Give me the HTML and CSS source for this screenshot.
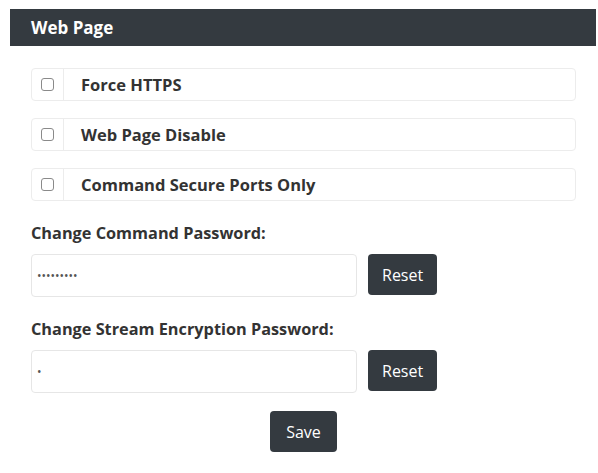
FILE: index.html
```html
<!DOCTYPE html>
<html lang="en">
<head>
    <meta charset="UTF-8">
    <meta name="viewport" content="width=device-width, initial-scale=1.0">
    <title>Web Page Settings</title>
    <link rel="stylesheet" href="styles.css">
</head>
<body>
    <div class="panel">
        <div class="panel-header">Web Page</div>

        <div class="panel-body">
            <div class="check-row">
                <span class="check-cell"><input type="checkbox" id="force-https"></span>
                <label class="check-label" for="force-https">Force HTTPS</label>
            </div>

            <div class="check-row">
                <span class="check-cell"><input type="checkbox" id="web-disable"></span>
                <label class="check-label" for="web-disable">Web Page Disable</label>
            </div>

            <div class="check-row">
                <span class="check-cell"><input type="checkbox" id="secure-ports"></span>
                <label class="check-label" for="secure-ports">Command Secure Ports Only</label>
            </div>

            <div class="field">
                <label class="field-label" for="cmd-pass">Change Command Password:</label>
                <div class="field-row">
                    <input class="text-input" type="password" id="cmd-pass" value="123456789">
                    <button class="btn">Reset</button>
                </div>
            </div>

            <div class="field">
                <label class="field-label" for="stream-pass">Change Stream Encryption Password:</label>
                <div class="field-row">
                    <input class="text-input" type="password" id="stream-pass" value="1">
                    <button class="btn">Reset</button>
                </div>
            </div>

            <div class="actions">
                <button class="btn btn-save">Save</button>
            </div>
        </div>
    </div>
</body>
</html>
```

FILE: styles.css
```css
* {
    margin: 0;
    padding: 0;
    box-sizing: border-box;
    font-family: 'Open Sans', 'Noto Sans', sans-serif;
}

body {
    background-color: #ffffff;
    color: #333333;
}

.panel {
    padding: 9px 2px 0 10px;
}

.panel-header {
    background-color: #343a40;
    color: white;
    font-size: 17px;
    font-weight: bold;
    height: 37px;
    line-height: 37px;
    padding-left: 21px;
}

.panel-body {
    padding: 22px 20px 0 21px;
}

.check-row {
    display: flex;
    align-items: stretch;
    height: 33px;
    border: 1px solid #ececec;
    border-radius: 4px;
    margin-bottom: 17px;
}

.check-cell {
    width: 32px;
    display: flex;
    align-items: center;
    justify-content: center;
    border-right: 1px solid #ececec;
}

.check-cell input {
    appearance: none;
    width: 13px;
    height: 13px;
    border: 1px solid #8a8a8a;
    border-radius: 3px;
    background-color: white;
}

.check-label {
    display: flex;
    align-items: center;
    padding-left: 17px;
    font-size: 16.5px;
    font-weight: bold;
}

.field {
    margin-top: 21px;
}

.field + .field {
    margin-top: 21px;
}

.field-label {
    display: block;
    font-size: 16.3px;
    line-height: 22px;
    font-weight: bold;
    margin-bottom: 10px;
}

.field-row {
    display: flex;
    gap: 11px;
    align-items: flex-start;
}

.text-input {
    width: 326px;
    height: 43px;
    border: 1px solid #e6e6e6;
    border-radius: 4px;
    padding: 0 5px;
    font-size: 12px;
    color: #555;
    outline: none;
}

.btn {
    background-color: #343a40;
    color: white;
    border: none;
    border-radius: 4px;
    height: 41px;
    padding: 0 14px;
    font-size: 16px;
}

.btn-save {
    padding: 0 16px;
}

.actions {
    display: flex;
    justify-content: center;
    margin-top: 18px;
}
```
